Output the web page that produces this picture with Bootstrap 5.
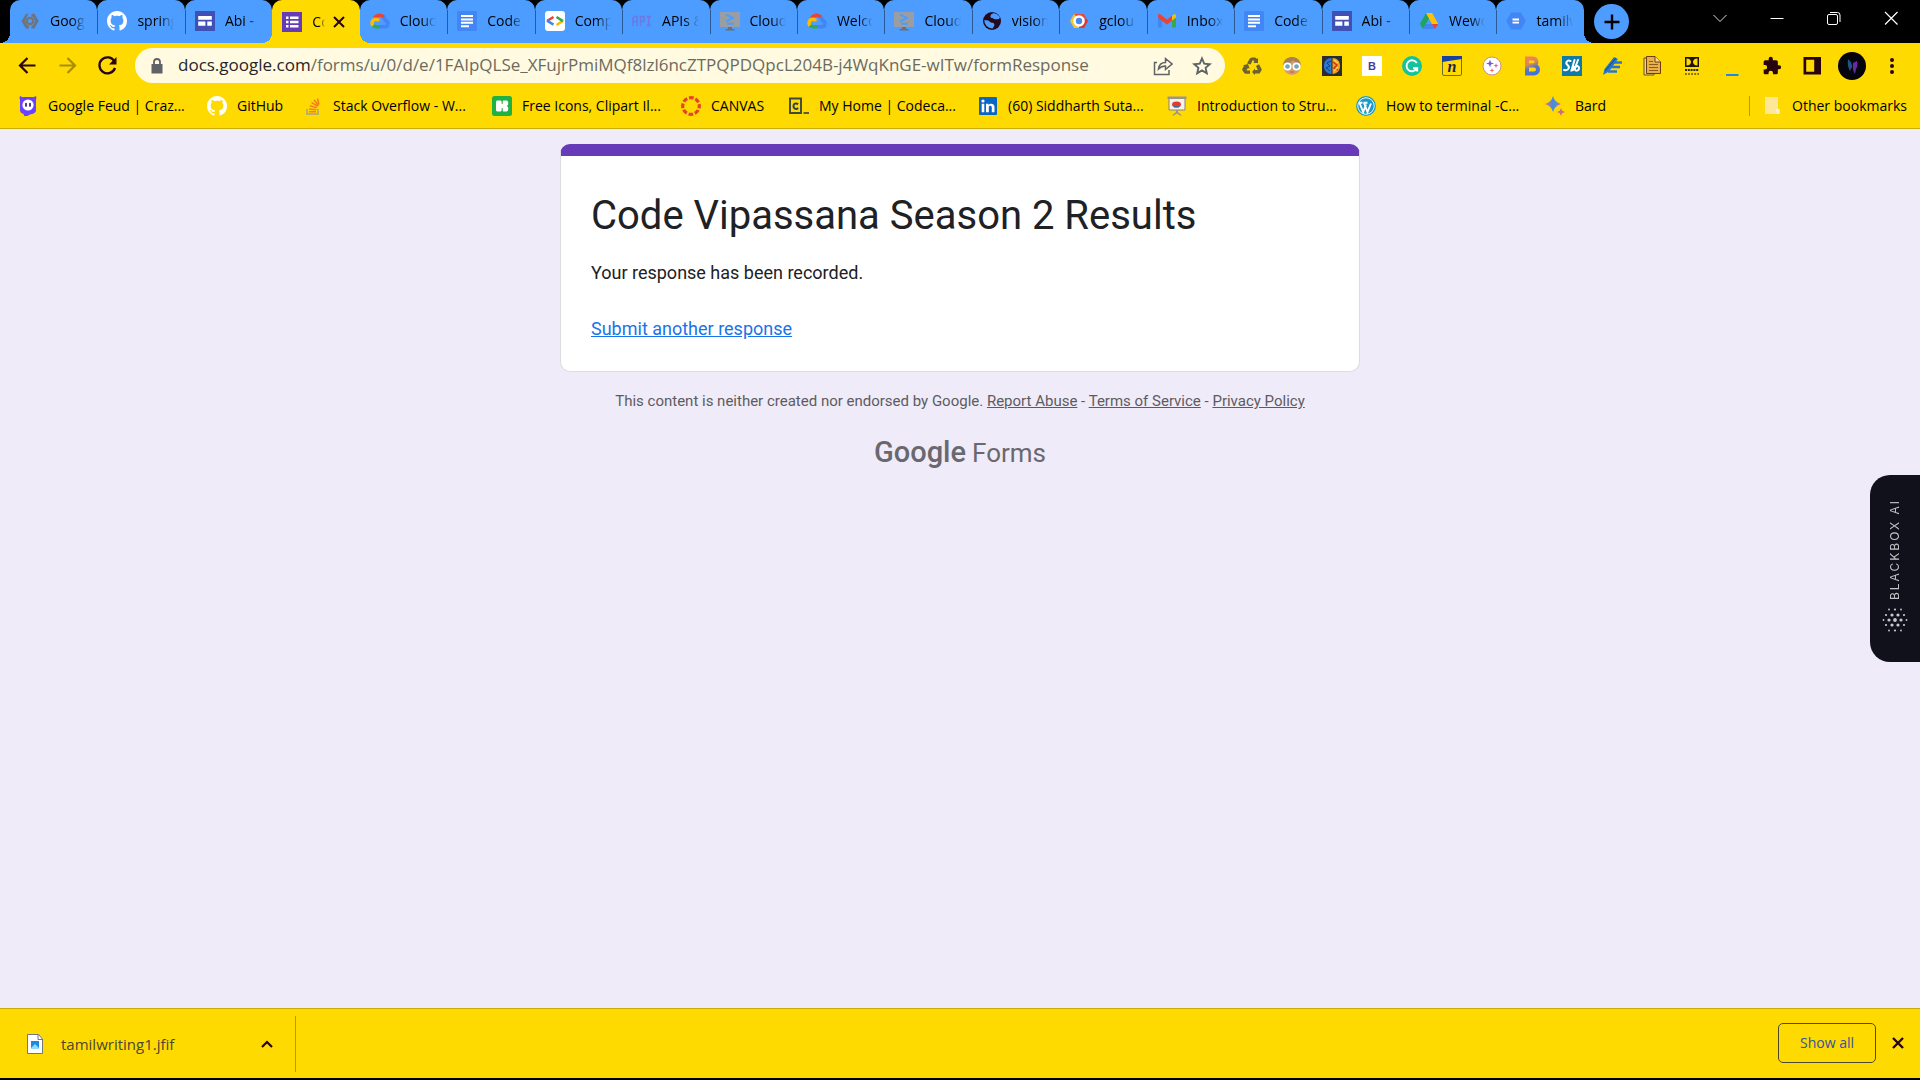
<!DOCTYPE html>
<html lang="en">
<head>
<meta charset="utf-8">
<meta name="viewport" content="width=device-width, initial-scale=1">
<title>Code Vipassana Season 2 Results</title>
<link href="https://cdn.jsdelivr.net/npm/bootstrap@5.3.0/dist/css/bootstrap.min.css" rel="stylesheet">
<style>
:root { --sun: #ffda00; --tab: #4c9dff; --ink: #26050f; }
body { font-family: "Open Sans", "Noto Sans", sans-serif; font-size: 14px; line-height: 20px; background: #000; color: #000; overflow-x: hidden; }
button { border: 0; background: none; padding: 0; color: inherit; }
a.plain { color: inherit; text-decoration: none; }
svg { display: block; flex: none; }
.ic { width: 20px; height: 20px; }

/* tab strip */
.strip { height: 43px; background: #000; padding-left: 10px; }
.tabs { max-width: 1574px; flex: 1 1 0; min-width: 0; }
.tab-item { position: relative; flex: 1 1 0; min-width: 0; height: 43px; background: var(--tab); border-radius: 10px 10px 0 0; padding: 0 11px 0 10px; }
.tab-item + .tab-item:not(.active):not(.after-active)::before { content: ""; position: absolute; left: 0; top: 10px; width: 1px; height: 24px; background: #2a5b96; }
.tab-item.active { background: var(--sun); z-index: 1; }
.tab-item.active::before, .tab-item.active::after, .strip-start::after, .strip-end::after { content: ""; position: absolute; bottom: 0; width: 10px; height: 10px; }
.tab-item.active::before { left: -10px; background: radial-gradient(circle at 0 0, transparent 10px, var(--sun) 10px); }
.tab-item.active::after { right: -10px; background: radial-gradient(circle at 100% 0, transparent 10px, var(--sun) 10px); }
.strip-start::after { left: -10px; background: radial-gradient(circle at 0 0, transparent 10px, var(--tab) 10px); }
.strip-end::after { right: -10px; background: radial-gradient(circle at 100% 0, transparent 10px, var(--tab) 10px); }
.tab-text { flex: 1 1 0; min-width: 0; overflow: hidden; white-space: nowrap; text-align: left; -webkit-mask-image: linear-gradient(90deg, #000 60%, transparent); mask-image: linear-gradient(90deg, #000 60%, transparent); }
.tab-btn { gap: 10px; min-width: 0; flex: 1 1 0; height: 42px; }
.new-tab { width: 35px; height: 35px; background: var(--tab); border-radius: 50%; margin-left: 10px; }
.win { gap: 33px; padding-right: 17px; height: 36px; }
.win button { width: 24px; height: 24px; }

/* toolbar */
.bar { background: var(--sun); }
.tools { height: 45px; padding: 0 18px 0 15px; }
.nav-btns { gap: 15px; margin-right: 15px; }
.nav-btns button { width: 25px; height: 25px; }
.nav-btns svg { width: 25px; height: 25px; }
.omni { height: 35px; border-radius: 18px; background: #fffae0; padding: 0 13px 0 12px; gap: 11px; min-width: 0; }
.omni svg { width: 20px; height: 20px; }
.url-wrap { position: relative; min-width: 0; height: 35px; }
.url-box { position: absolute; inset: 0; width: 100%; border: 0; background: transparent; color: transparent; font-size: 17px; line-height: 35px; padding: 0; }
.url-show { font-size: 17px; line-height: 34px; white-space: nowrap; overflow: hidden; color: #6c6a5f; }
.url-show b { font-weight: 400; color: #26242a; }
.exts { gap: 20px; margin-left: 17px; }
.avatar { width: 28px; height: 28px; margin: 0 -4px; }
.marks { height: 41px; padding: 0 13px 4px 18px; gap: 20px; border-bottom: 1px solid #c9ac08; white-space: nowrap; }
.marks a { display: flex; align-items: center; gap: 10px; }
.w-long span { width: 139px; } .w-git span { width: 46px; } .w-can span { width: 58px; }
.rule { width: 1px; height: 20px; background: #b79c00; }

/* form page */
.page { background: #f0ebf8; font-family: Roboto, sans-serif; position: relative; padding: 15px 16px 0; }
.form-col { max-width: 800px; }
.form-card { background: #fff; border: 1px solid #dadce0; border-top: 12px solid #673ab7; border-radius: 10px; }
.form-body { padding: 35px 30px 30px; color: #202124; font-size: 18px; line-height: 24px; }
.form-body h1 { font-size: 40px; line-height: 50px; font-weight: 400; margin: 0 0 20px; }
.form-body p { margin: 0 0 32px; }
.form-body a { color: #1a73e8; }
.legal { font-size: 15px; line-height: 20px; color: #5d5b62; margin: 19px 0 0; }
.legal a { color: inherit; }
.brand { font-size: 26px; line-height: 36px; color: #6a686f; margin-top: 23px; gap: 6px; }
.brand strong { font-size: 29px; font-weight: 500; }
.blackbox { position: absolute; right: 0; top: 346px; width: 50px; height: 187px; background: #10111a; color: #c2c2c6; border-radius: 20px 0 0 20px; gap: 6px; padding-bottom: 5px; }
.blackbox span { writing-mode: vertical-rl; transform: rotate(180deg); font: 12px/16px Inter, sans-serif; letter-spacing: 2px; }

/* downloads */
.shelf { height: 70px; border-top: 1px solid #c9ac08; padding: 0 16px 0 25px; }
.dl { width: 271px; height: 56px; border-right: 1px solid #b79c00; padding-right: 20px; gap: 16px; color: #4b4635; font-size: 15px; }
.show-all { width: 98px; height: 40px; border: 1px solid #4c4732; border-radius: 5px; color: #3550a5; font-size: 14px; }
.shelf-end { padding-bottom: 2px; }
.edge { height: 2px; background: #000; }
</style>
</head>
<body class="min-vh-100 d-flex flex-column">
<svg width="0" height="0" class="position-absolute" aria-hidden="true">
<defs>
<linearGradient id="gb" gradientUnits="userSpaceOnUse" x1="5" y1="0" x2="13" y2="20"><stop offset="0" stop-color="#ff7a59"/><stop offset=".4" stop-color="#d98a50"/><stop offset=".6" stop-color="#5577c0"/><stop offset="1" stop-color="#3f6fe8"/></linearGradient>
<linearGradient id="gbard" x1="0" y1="0" x2="1" y2="0"><stop offset="0" stop-color="#e07070"/><stop offset=".5" stop-color="#3f8ee0"/><stop offset="1" stop-color="#a678c8"/></linearGradient>
<linearGradient id="gfish" x1="0" y1="0" x2="1" y2="0"><stop offset="0" stop-color="#0b5f78"/><stop offset="1" stop-color="#7a1fb0"/></linearGradient>
<symbol id="hex" viewBox="0 0 20 20"><path d="M6 2.700h2.600L5 10l2.500 4.500H9v3H5.700L1.500 10zM11.500 2.700h3l4.200 7.300-4.300 7.500H11.500v-3h1.400L15.200 10l-2.400-4.300h-1.300z" fill="#6d7480"/><circle cx="10" cy="10" r="3.200" fill="none" stroke="#77736f" stroke-width="2.200"/></symbol>
<symbol id="github" viewBox="0 0 16 16"><path fill="#fff" d="M8 0C3.580 0 0 3.580 0 8c0 3.540 2.290 6.530 5.470 7.590.4.070.55-.17.55-.38 0-.19-.01-.82-.01-1.490-2.010.37-2.530-.49-2.690-.94-.09-.23-.48-.94-.82-1.130-.28-.15-.68-.52-.01-.53.63-.01 1.080.58 1.230.82.72 1.210 1.870.87 2.330.66.07-.52.28-.87.51-1.070-1.780-.2-3.640-.89-3.640-3.950 0-.87.31-1.590.82-2.150-.08-.2-.36-1.020.08-2.120 0 0 .67-.21 2.200.82.64-.18 1.320-.27 2-.27s1.360.09 2 .27c1.530-1.040 2.200-.82 2.200-.82.44 1.100.16 1.920.08 2.120.51.56.82 1.270.82 2.150 0 3.070-1.870 3.750-3.650 3.950.29.25.54.73.54 1.480 0 1.070-.01 1.930-.01 2.200 0 .21.15.46.55.38A8 8 0 0 0 16 8c0-4.420-3.580-8-8-8z"/></symbol>
<symbol id="abi" viewBox="0 0 20 20"><path fill="#3f51b5" d="M0 0h20v20H0z"/><path fill="#fff" d="M3.200 5h13.600v3.800H3.200zM3.200 10.400h7.200v4.300H3.200zM12.300 10.400h4.500v4.300h-4.500z"/></symbol>
<symbol id="forms" viewBox="0 0 20 20"><path fill="#673ab7" d="M0 0h20v20H0z"/><path fill="#fff" d="M4 4.500h2.500V7H4zM8 4.500h8.500V7H8zM4 8.800h2.500v2.500H4zM8 8.800h8.500v2.500H8zM4 13h2.500v2.500H4zM8 13h8.500v2.500H8z"/></symbol>
<symbol id="cloud" viewBox="0 0 20 20"><path fill="none" stroke="#ea4335" stroke-width="3.600" d="M4.600 7.200A5.800 5.800 0 0 1 14 6.200"/><path fill="none" stroke="#4285f4" stroke-width="3.600" d="M13.500 6.200c1.200 1 1.700 2 1.900 3.200 3.500.8 3.400 6.300-.8 6.300H10"/><path fill="none" stroke="#fbbc04" stroke-width="3.600" d="M3.200 14.700c-2-2-1.400-5 1.300-6.200 2-.8 3.300 0 4.500 1.500"/><path fill="none" stroke="#34a853" stroke-width="3.600" d="M3 14.600c1 .8 2 1.100 3.300 1.100H10"/></symbol>
<symbol id="docs" viewBox="0 0 20 20"><rect width="20" height="20" rx="1.500" fill="#4285f4"/><path stroke="#fff" stroke-width="2" d="M4 5h12M4 8.400h12M4 11.800h12M4 15.200h8"/></symbol>
<symbol id="comp" viewBox="0 0 20 20"><rect width="20" height="20" rx="3" fill="#fff"/><g fill="none" stroke-width="2.600"><path stroke="#ea4335" d="M8.500 6 2 10"/><path stroke="#4285f4" d="m2 9.600 6.500 4"/><path stroke="#fbbc04" d="m11.500 14 6.500-4.200"/><path stroke="#34a853" d="m11.500 6 6.500 4.200"/></g></symbol>
<symbol id="api" viewBox="0 0 20 20"><g fill="none" stroke="#6c7be4" stroke-width="1.700"><path d="M1 15V7l1.500-1.500H5V15M1 10.500h4M8.500 15V5.700H12V10.500H8.500M14.500 5.700H19M16.800 5.700v8.500M14.500 14.300H19"/></g></symbol>
<symbol id="shell" viewBox="0 0 20 20"><path fill="#9a9ea3" d="M0 1h20v15H0z"/><path fill="#6c6f75" d="M8 16h4v2h2.500v1.500h-9V18H8z"/><path fill="none" stroke="#4c9dff" stroke-width="2" d="m6 3.500 7 3.500-7 3.500M7 12.800h7"/></symbol>
<symbol id="globe" viewBox="0 0 20 20"><circle cx="10" cy="10" r="9" fill="#26091a"/><path fill="#4c9dff" d="M12 2.300c-2 .2-3 1-3.500 2.400-.4 1.300.5 2.300 2 2.400l2 1.200h4l1.500-1.500A8 8 0 0 0 12 2.300zM2.300 9l4 .4 2.500 2 2.800.6 1 2-2 3.400A8 8 0 0 1 2.300 9z"/></symbol>
<symbol id="gclou" viewBox="0 0 20 20"><path fill="#f4c430" d="m1 10 4-7h5v14H5z"/><path fill="#e64a3b" d="M5 3h10l2.500 4.500L10 8z"/><path fill="#d9382d" d="M10 17h5l4-7-1.500-2.500L10 11z"/><circle cx="10" cy="10" r="5.800" fill="#fff"/><circle cx="10" cy="10" r="3.200" fill="#4c86f0"/></symbol>
<symbol id="gmail" viewBox="0 0 20 20"><path fill="#4285f4" d="M1 16.500V6l4 3v7.500z"/><path fill="#34a853" d="M15 16.500V9l4-3v10.500z"/><path fill="#ea4335" d="M1 6.500V4.500c0-1.500 1.500-1.700 2.500-1L10 8.500l5-3.700v5L10 13.500 1 6.800z"/><path fill="#fbbc04" d="m15 4.800 1.500-1.200c1-.8 2.500-.4 2.500 1v2L15 9.700z"/></symbol>
<symbol id="drive" viewBox="0 0 20 20"><path fill="#1ea362" d="M7 2 .8 13 4 18 10 7.500z"/><path fill="#ffc107" d="M7 2h6.200l6 11H13z"/><path fill="#4285f4" d="M4 18h12l-3-5H6.800z"/><path fill="#ea4335" d="M13 13h6.200L16 18z"/></symbol>
<symbol id="eq" viewBox="0 0 20 20"><path fill="#4285f4" d="M5 1.500h10l4.800 8.500-4.800 8.500H5L.2 10z"/><path stroke="#fff" stroke-width="1.800" d="M6.500 8.500h6.500M6.500 11.700h6.500"/></symbol>
<symbol id="recycle" viewBox="0 0 20 20"><g fill="#6b6134"><path d="M5 7.500 7.500 3q.8-1.500 2.500-1.500h3q1 0 1.800 1.500L16 2v5h-4.800l1.300-1-1.500-2.300L8.500 8.500zM14 10l3-1.800 2.300 4.300q.8 1.300-.2 2.500l-1.500 2.500H13V19l-3-3 3-3.500V14h2.800zM2 10l-1-.8L6 8l1.700 4.800L6 12l-1.700 2.500H8v3.300H4q-1.500 0-2.200-1.500L.4 14.200q-.5-1 .2-2z"/></g></symbol>
<symbol id="face" viewBox="0 0 20 20"><circle cx="10" cy="10.500" r="8.500" fill="#d79a6c"/><path fill="#a5815a" d="M1 9C2 3 6 1 10 1s8 2 9 8C14 7 12 5 11 4 9 7 5 8 1 9z"/><g fill="#6fa9b5" stroke="#fff" stroke-width="1.700"><circle cx="5.500" cy="10.500" r="3.200"/><circle cx="14.500" cy="10.500" r="3.200"/></g><path stroke="#c85a50" d="M8 16h4"/></symbol>
<symbol id="brain" viewBox="0 0 20 20"><path fill="#2b2a35" d="M0 0h20v20H0z"/><path fill="#2b78d0" d="M9.500 2C5 2 2 5 2 10s3 7.500 7.500 8z"/><path fill="#f2a01e" d="M10.500 2C15 2 18 5 18 10s-3 7.500-7.500 8z"/><path stroke="#d82f22" stroke-width="1.500" fill="none" d="m11 6 4 3-3 3 4 2"/><path stroke="#f7dc30" stroke-width="1.500" fill="none" d="m12 4 4 3M12 15l4-4"/><path stroke="#123c84" stroke-width="1" fill="none" d="M9 5 5 7l3 3-4 2 4 3"/></symbol>
<symbol id="bwhite" viewBox="0 0 20 20"><path fill="#fff" d="M0 0h20v20H0z"/><text x="10" y="14" font-family="Liberation Sans" font-weight="700" font-size="11" fill="#4a3c9c" text-anchor="middle">B</text></symbol>
<symbol id="gram" viewBox="0 0 20 20"><circle cx="10" cy="10" r="10" fill="#15c39a"/><path fill="none" stroke="#fff" stroke-width="1.900" d="M14.800 7A5.500 5.500 0 1 0 15 12.200h-4M15.200 12v3.500"/></symbol>
<symbol id="nbox" viewBox="0 0 20 20"><rect x=".5" y=".5" width="19" height="19" rx="1.500" fill="#ffda00" stroke="#6e6a3f"/><path fill="#1b3fa0" d="M0 0h20v3L0 6z"/><text x="10" y="16" font-family="Liberation Serif" font-style="italic" font-weight="700" font-size="16" fill="#1c2450" text-anchor="middle">n</text></symbol>
<symbol id="sparkc" viewBox="0 0 20 20"><circle cx="10" cy="10" r="9" fill="#fff" stroke="#c98e96"/><path fill="#7b5ad0" d="m8 3.500 1 3 3 1-3 1-1 3-1-3-3-1 3-1z"/><path fill="#e0559a" d="m14 7 .6 2 2 .6-2 .6-.6 2-.6-2-2-.6 2-.6z"/><path fill="#e96c5a" d="m10 12 .6 1.800 1.800.6-1.800.6L10 17l-.6-2-1.800-.6 1.800-.6z"/></symbol>
<symbol id="bgrad" viewBox="0 0 20 20"><path fill="none" stroke="url(#gb)" stroke-width="4" d="M5 2.500h6a3.400 3.400 0 0 1 0 6.800H5zM5 9.500h7a3.900 3.900 0 0 1 0 8H5z"/></symbol>
<symbol id="sb" viewBox="0 0 20 20"><path fill="#0e7aa5" d="M0 0h20v20H0z"/><path fill="none" stroke="#fff" stroke-width="2" stroke-linecap="round" d="M8.500 5C5 3.500 3 7 5.500 9s1.500 6-3.500 5M12.500 4 9.500 14.500c3 0 3-4 1.500-5M16 4l-3 8c-.5 4 4 3 4 0 0-2-2-2.500-3-1"/></symbol>
<symbol id="pen" viewBox="0 0 20 20"><path fill="#2678cf" d="m1 19 1.500-6L12 1l4 2L7 15.500z"/><path stroke="#2678cf" stroke-width="2.400" d="M11 6.500h9M9 11h9M6 15.500h9"/><path stroke="#134a80" d="M3 15 14 2"/></symbol>
<symbol id="papers" viewBox="0 0 20 20"><path fill="#ecd97a" stroke="#6b5215" d="M2 2h10v17H2z"/><path fill="#e9b04a" stroke="#6b3d10" d="M4.500.5H13L18.500 6v11.500h-14z"/><path fill="#f5df9a" stroke="#6b3d10" d="M13 .5V6h5.500"/><path stroke="#8c5a1c" d="M7 5.500h4M7 8.500h9M7 11.500h9M7 14.500h9"/></symbol>
<symbol id="dolby" viewBox="0 0 20 20"><path fill="#1b1608" d="M3 1h14v10H3z"/><path fill="#ffda00" d="M4.500 2.500c6 0 6 7 0 7zM15.500 2.500c-6 0-6 7 0 7z"/><path stroke="#2b2306" stroke-width="2.200" stroke-dasharray="2 .8" d="M3 14h14"/><path stroke="#7d6c10" stroke-width="2.200" stroke-dasharray="1.800 1.300" d="M3 18h14"/></symbol>
<symbol id="dash" viewBox="0 0 20 20"><path fill="#1e88e5" d="M4 18h12.500v2H4z"/></symbol>
<symbol id="puzzle" viewBox="0 0 24 24"><path fill="#26050f" d="M20.500 11H19V7c0-1.100-.9-2-2-2h-4V3.500a2.500 2.500 0 0 0-5 0V5H4c-1.100 0-2 .9-2 2v3.800h1.500a2.700 2.700 0 0 1 0 5.400H2V20c0 1.100.9 2 2 2h3.800v-1.500a2.700 2.700 0 0 1 5.400 0V22H17c1.100 0 2-.9 2-2v-4h1.500a2.500 2.500 0 0 0 0-5z"/></symbol>
<symbol id="panel" viewBox="0 0 20 20"><path fill="#26050f" d="M1.500 1h17.500v17.500H1.500zM4.200 3.700v12h8v-12z" fill-rule="evenodd"/></symbol>
<symbol id="feud" viewBox="0 0 20 20"><path fill="#6842ff" d="M2 0q2 1.500 4 1h8q2 .5 4-1 .8 1.500 0 4v10q0 3-4 4l-2 .5L9.500 20H6l-.3-2Q2 17 2 14V4q-1-3 0-4z"/><circle cx="10" cy="9" r="5.600" fill="#fff"/><path stroke="#2b1a80" stroke-width="1.700" stroke-linecap="round" d="M8 7.500v2.500M12 7.500v2.500"/></symbol>
<symbol id="so" viewBox="0 0 20 20"><path fill="none" stroke="#aaa38c" stroke-width="1.500" d="M4 13v5h11v-5"/><g stroke="#f48024" stroke-width="1.600"><path d="M6 15.800h7M6 13l7.300.8M6.800 9.700l7 2M8.500 6.400l6.200 3.800M11 3.800l4.500 5.700M14.500 2.500l1.500 6"/></g></symbol>
<symbol id="icons8" viewBox="0 0 20 20"><rect width="20" height="20" rx="2.500" fill="#1fb141"/><path fill="#fff" d="m4 5.500 1-1h4l1 1.500 1-1.500h4l1.200 1.500v2.500L15 10l1.200 1.500V14L15 15.500h-4L10 14l-1 1.500H5l-1-1z"/><path stroke="#1fb141" d="M10.200 4v4M10.200 12v4"/></symbol>
<symbol id="canvas" viewBox="0 0 20 20"><circle cx="10" cy="10" r="8.300" fill="none" stroke="#e4432b" stroke-width="3.200" stroke-dasharray="4.720 1.800" stroke-dashoffset="2.300"/></symbol>
<symbol id="codec" viewBox="0 0 20 20"><path fill="none" stroke="#3b4a42" stroke-width="1.900" d="M1 2.500h11v14.500H1z"/><path fill="none" stroke="#2b3f4f" stroke-width="2" d="M9.200 8.200C6.500 6.500 4.500 8 4.500 10.200s2 3.700 4.700 2"/><path stroke="#3b4a42" stroke-width="1.700" d="M14.500 17H20"/></symbol>
<symbol id="linked" viewBox="0 0 20 20"><rect x="1" y="1" width="18" height="18" rx="1" fill="#0a66c2"/><path fill="#fff" d="M3.700 7.800h2.600v8.500H3.700zM8 7.800h2.500V9c1.500-2.200 6-1.800 6 2v5.300h-2.700v-4.600c0-2.600-3-2.400-3 0v4.600H8z"/><circle cx="5" cy="5" r="1.600" fill="#fff"/></symbol>
<symbol id="board" viewBox="0 0 20 20"><path fill="#f4f1ea" stroke="#8a8178" d="M2 2h16v12H2z"/><path fill="#9c958e" d="M.5.500h19V3H.5zM9 14h2v2l4 3.500h-2l-3-2-3 2H5L9 16z"/><ellipse cx="9.500" cy="8.500" rx="4.500" ry="3" fill="#e03c2b"/><path fill="#4069ad" d="M7 10h5v1.500H7z"/></symbol>
<symbol id="wp" viewBox="0 0 20 20"><circle cx="10" cy="10" r="9.300" fill="#fff" stroke="#1a9bc4" stroke-width="1.300"/><circle cx="10" cy="10" r="7.800" fill="#1a9bc4"/><path fill="none" stroke="#fff" stroke-width="1.900" d="m3.500 7 3.700 9L10 8.500M8 7l3.500 9L15 7.500M3 6.800h3.500M7.500 6.800h4"/></symbol>
<symbol id="bard" viewBox="0 0 20 20"><path fill="url(#gbard)" d="M8 0q1.500 6 8 8-6.500 2-8 8-1.500-6-8-8 6.500-2 8-8z"/><path fill="#d3687e" d="m16 12 1.200 2.800L20 16l-2.800 1.200L16 20l-1.200-2.800L12 16l2.800-1.200z"/></symbol>
<symbol id="folder" viewBox="0 0 20 20"><path fill="#ffe79a" d="M3 1h13v11.500l1.500 1V18H3z"/><path fill="#fff3ca" d="M13.500 13h4v5h-2.500z"/></symbol>
</defs></svg>

<header>
<div class="strip d-flex align-items-center">
<ul class="tabs d-flex list-unstyled mb-0" aria-label="Tabs">
<li class="tab-item strip-start d-flex"><button class="tab-btn d-flex align-items-center"><svg class="ic"><use href="#hex"/></svg><span class="tab-text">Goog</span></button></li>
<li class="tab-item d-flex"><button class="tab-btn d-flex align-items-center"><svg class="ic"><use href="#github"/></svg><span class="tab-text">spring</span></button></li>
<li class="tab-item d-flex"><button class="tab-btn d-flex align-items-center"><svg class="ic"><use href="#abi"/></svg><span class="tab-text">Abi -</span></button></li>
<li class="tab-item active d-flex align-items-center"><button class="tab-btn d-flex align-items-center"><svg class="ic"><use href="#forms"/></svg><span class="tab-text">Co</span></button><button aria-label="Close tab" class="ms-2 me-1"><svg width="12" height="12" viewBox="0 0 12 12"><path stroke="#26050f" stroke-width="2" d="m1 1 10 10M11 1 1 11"/></svg></button></li>
<li class="tab-item after-active d-flex"><button class="tab-btn d-flex align-items-center"><svg class="ic"><use href="#cloud"/></svg><span class="tab-text">Cloud</span></button></li>
<li class="tab-item d-flex"><button class="tab-btn d-flex align-items-center"><svg class="ic"><use href="#docs"/></svg><span class="tab-text">Code</span></button></li>
<li class="tab-item d-flex"><button class="tab-btn d-flex align-items-center"><svg class="ic"><use href="#comp"/></svg><span class="tab-text">Comp</span></button></li>
<li class="tab-item d-flex"><button class="tab-btn d-flex align-items-center"><svg class="ic"><use href="#api"/></svg><span class="tab-text">APIs &amp;</span></button></li>
<li class="tab-item d-flex"><button class="tab-btn d-flex align-items-center"><svg class="ic"><use href="#shell"/></svg><span class="tab-text">Cloud</span></button></li>
<li class="tab-item d-flex"><button class="tab-btn d-flex align-items-center"><svg class="ic"><use href="#cloud"/></svg><span class="tab-text">Welco</span></button></li>
<li class="tab-item d-flex"><button class="tab-btn d-flex align-items-center"><svg class="ic"><use href="#shell"/></svg><span class="tab-text">Cloud</span></button></li>
<li class="tab-item d-flex"><button class="tab-btn d-flex align-items-center"><svg class="ic"><use href="#globe"/></svg><span class="tab-text">vision</span></button></li>
<li class="tab-item d-flex"><button class="tab-btn d-flex align-items-center"><svg class="ic"><use href="#gclou"/></svg><span class="tab-text">gclou</span></button></li>
<li class="tab-item d-flex"><button class="tab-btn d-flex align-items-center"><svg class="ic"><use href="#gmail"/></svg><span class="tab-text">Inbox</span></button></li>
<li class="tab-item d-flex"><button class="tab-btn d-flex align-items-center"><svg class="ic"><use href="#docs"/></svg><span class="tab-text">Code</span></button></li>
<li class="tab-item d-flex"><button class="tab-btn d-flex align-items-center"><svg class="ic"><use href="#abi"/></svg><span class="tab-text">Abi -</span></button></li>
<li class="tab-item d-flex"><button class="tab-btn d-flex align-items-center"><svg class="ic"><use href="#drive"/></svg><span class="tab-text">Wewo</span></button></li>
<li class="tab-item strip-end d-flex"><button class="tab-btn d-flex align-items-center"><svg class="ic"><use href="#eq"/></svg><span class="tab-text">tamilw</span></button></li>
</ul>
<button class="new-tab d-flex align-items-center justify-content-center" aria-label="New tab"><svg width="16" height="16" viewBox="0 0 16 16"><path stroke="#000" stroke-width="2.400" d="M8 .5v15M.5 8h15"/></svg></button>
<div class="win d-flex align-items-center align-self-start ms-auto">
<button aria-label="Search tabs"><svg width="24" height="24" viewBox="0 0 24 24"><path fill="none" stroke="#ddd" d="m5.500 9 6.500 6.500L18.500 9"/></svg></button>
<button aria-label="Minimize"><svg width="24" height="24" viewBox="0 0 24 24"><path stroke="#fff" d="M5.500 12.500h13"/></svg></button>
<button aria-label="Restore"><svg width="24" height="24" viewBox="0 0 24 24"><g fill="none" stroke="#fff"><rect x="5.500" y="8.500" width="10" height="10" rx="1.500"/><path d="M8 6.500h7.500q2.500 0 2.500 2.500v7"/></g></svg></button>
<button aria-label="Close"><svg width="24" height="24" viewBox="0 0 24 24"><path stroke="#fff" stroke-width="1.200" d="m6 6 12.500 12.500M18.500 6 6 18.500"/></svg></button>
</div>
</div>

<div class="bar">
<div class="tools d-flex align-items-center">
<div class="nav-btns d-flex">
<button aria-label="Back"><svg viewBox="0 0 25 25"><path fill="none" stroke="#26050f" stroke-width="2.200" d="M20.500 12.500H6M12.500 5l-7.500 7.500 7.500 7.500"/></svg></button>
<button aria-label="Forward"><svg viewBox="0 0 25 25"><path fill="none" stroke="#a98d08" stroke-width="2.200" d="M4.500 12.500H19M12.500 5l7.500 7.500-7.500 7.500"/></svg></button>
<button aria-label="Reload"><svg viewBox="0 0 25 25"><path fill="none" stroke="#26050f" stroke-width="2.300" d="M19.500 8.500A8 8 0 1 0 20 15"/><path fill="#26050f" d="M21.500 4v7.500H14z"/></svg></button>
</div>
<div class="omni d-flex align-items-center flex-grow-1">
<svg viewBox="0 0 20 20"><path fill="#5f6368" d="M4.500 8h11v9.500h-11z"/><path fill="none" stroke="#5f6368" stroke-width="1.800" d="M7 8.500V6a3 3 0 0 1 6 0v2.500"/></svg>
<div class="url-wrap flex-grow-1"><div class="url-show"><b>docs.google.com</b>/forms/u/0/d/e/1FAIpQLSe_XFujrPmiMQf8lzl6ncZTPQPDQpcL204B-j4WqKnGE-wITw/formResponse</div><input class="url-box" type="text" aria-label="Address and search bar"></div>
<button aria-label="Share"><svg viewBox="0 0 20 20"><path fill="none" stroke="#5f6368" stroke-width="1.500" d="M4 6.500H1.500v12H16V14M5.500 13c.5-4.500 3-6.500 7-6.500V2.500L19 8l-6.500 5.500V10c-3 0-5 .8-7 3z"/></svg></button>
<button aria-label="Bookmark this tab" class="ms-2"><svg viewBox="0 0 20 20"><path fill="none" stroke="#5f6368" stroke-width="1.900" d="m10 2.500 2.200 5.200 5.600.5-4.200 3.700 1.200 5.400L10 14.400l-4.800 2.900 1.200-5.400-4.200-3.700 5.600-.5z"/></svg></button>
</div>
<div class="exts d-flex align-items-center">
<button aria-label="Recycle"><svg class="ic"><use href="#recycle"/></svg></button>
<button aria-label="Dark reader"><svg class="ic"><use href="#face"/></svg></button>
<button aria-label="Brain"><svg class="ic"><use href="#brain"/></svg></button>
<button aria-label="Blackbox"><svg class="ic"><use href="#bwhite"/></svg></button>
<button aria-label="Grammar"><svg class="ic"><use href="#gram"/></svg></button>
<button aria-label="Notes"><svg class="ic"><use href="#nbox"/></svg></button>
<button aria-label="Sparkle"><svg class="ic"><use href="#sparkc"/></svg></button>
<button aria-label="B"><svg class="ic"><use href="#bgrad"/></svg></button>
<button aria-label="Scribe"><svg class="ic"><use href="#sb"/></svg></button>
<button aria-label="Writer"><svg class="ic"><use href="#pen"/></svg></button>
<button aria-label="Clipboard"><svg class="ic"><use href="#papers"/></svg></button>
<button aria-label="Dolby Voice"><svg class="ic"><use href="#dolby"/></svg></button>
<button aria-label="Underscore"><svg class="ic"><use href="#dash"/></svg></button>
<button aria-label="Extensions"><svg class="ic"><use href="#puzzle"/></svg></button>
<button aria-label="Side panel"><svg class="ic"><use href="#panel"/></svg></button>
<button aria-label="Profile" class="avatar"><svg width="28" height="28" viewBox="0 0 28 28"><circle cx="14" cy="14" r="14" fill="#05040c"/><path fill="url(#gfish)" d="M10 7q4 3 4 8l-2 4q-3-5-2-12zM15 11l4-2q1 5-1 8l-1 5q-3-4-2-11z"/></svg></button>
<button aria-label="Menu"><svg class="ic" viewBox="0 0 20 20"><g fill="#26050f"><circle cx="10" cy="4" r="2"/><circle cx="10" cy="10" r="2"/><circle cx="10" cy="16" r="2"/></g></svg></button>
</div>
</div>
<nav class="marks d-flex align-items-center" aria-label="Bookmarks">
<a class="plain w-long" href="#"><svg class="ic"><use href="#feud"/></svg><span>Google Feud | Craz...</span></a>
<a class="plain w-git" href="#"><svg class="ic"><use href="#github"/></svg><span>GitHub</span></a>
<a class="plain w-long" href="#"><svg class="ic"><use href="#so"/></svg><span>Stack Overflow - W...</span></a>
<a class="plain w-long" href="#"><svg class="ic"><use href="#icons8"/></svg><span>Free Icons, Clipart Il...</span></a>
<a class="plain w-can" href="#"><svg class="ic"><use href="#canvas"/></svg><span>CANVAS</span></a>
<a class="plain w-long" href="#"><svg class="ic"><use href="#codec"/></svg><span>My Home | Codeca...</span></a>
<a class="plain w-long" href="#"><svg class="ic"><use href="#linked"/></svg><span>(60) Siddharth Suta...</span></a>
<a class="plain w-long" href="#"><svg class="ic"><use href="#board"/></svg><span>Introduction to Stru...</span></a>
<a class="plain w-long" href="#"><svg class="ic"><use href="#wp"/></svg><span>How to terminal -C...</span></a>
<a class="plain" href="#"><svg class="ic"><use href="#bard"/></svg><span>Bard</span></a>
<div class="d-flex align-items-center ms-auto gap-2"><span class="rule me-1"></span><a class="plain" href="#"><svg class="ic"><use href="#folder"/></svg><span>Other bookmarks</span></a></div>
</nav>
</div>
</header>

<main class="page flex-grow-1">
<div class="form-col mx-auto">
<section class="form-card">
<div class="form-body">
<h1>Code Vipassana Season 2 Results</h1>
<p>Your response has been recorded.</p>
<a href="#">Submit another response</a>
</div>
</section>
<p class="legal text-center">This content is neither created nor endorsed by Google. <a href="#">Report Abuse</a> - <a href="#">Terms of Service</a> - <a href="#">Privacy Policy</a></p>
<div class="brand d-flex justify-content-center align-items-baseline"><strong>Google</strong><span>Forms</span></div>
</div>
<button class="blackbox d-flex flex-column align-items-center justify-content-center"><span>BLACKBOX AI</span>
<svg width="26" height="26" viewBox="-13 -13 26 26"><g fill="#c9c9cd"><circle r="1.900"/><circle cx="-6" r="1.600"/><circle cx="6" r="1.600"/><circle cx="-11.500" r=".9"/><circle cx="11.500" r=".9"/><circle cx="-3" cy="-5" r="1.600"/><circle cx="3" cy="-5" r="1.600"/><circle cx="-9" cy="-5" r="1.100"/><circle cx="9" cy="-5" r="1.100"/><circle cx="-3" cy="5" r="1.600"/><circle cx="3" cy="5" r="1.600"/><circle cx="-9" cy="5" r="1.100"/><circle cx="9" cy="5" r="1.100"/><circle cy="-10.500" r="1.100"/><circle cx="-6" cy="-10.500" r=".9"/><circle cx="6" cy="-10.500" r=".9"/><circle cy="10.500" r="1.100"/><circle cx="-6" cy="10.500" r=".9"/><circle cx="6" cy="10.500" r=".9"/></g></svg></button>
</main>

<footer>
<div class="bar shelf d-flex align-items-center">
<div class="dl d-flex align-items-center">
<svg class="ic" viewBox="0 0 20 20"><path fill="#fff" stroke="#757575" d="M2.500.500h11l4 4.500v14.500h-15z"/><path fill="none" stroke="#757575" d="M13 .5V5.500h4.500"/><path fill="#1b8ae0" d="M6 7h8v8H6z"/><path fill="#8fdcff" d="m6 14 4-4 4 4v1H6z"/></svg>
<span>tamilwriting1.jfif</span>
<button class="ms-auto" aria-label="Download options"><svg width="16" height="16" viewBox="0 0 16 16"><path fill="none" stroke="#26050f" stroke-width="2.200" d="m3 11 5-5 5 5"/></svg></button>
</div>
<div class="shelf-end d-flex align-items-center gap-3 ms-auto">
<button class="show-all">Show all</button>
<button aria-label="Close downloads"><svg width="12" height="12" viewBox="0 0 12 12"><path stroke="#26050f" stroke-width="2.400" d="m1 1 10 10M11 1 1 11"/></svg></button>
</div>
</div>
<div class="edge"></div>
</footer>
<script src="https://cdn.jsdelivr.net/npm/bootstrap@5.3.0/dist/js/bootstrap.bundle.min.js"></script>
</body>
</html>
